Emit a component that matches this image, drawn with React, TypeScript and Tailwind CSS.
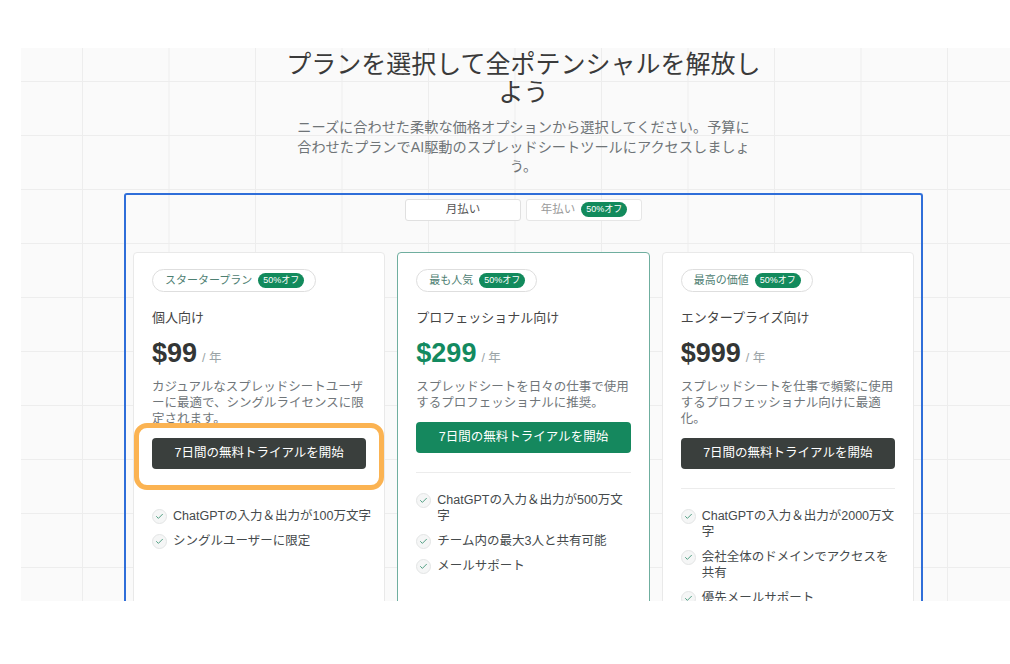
import { Check } from "lucide-react";

type Plan = {
  badge: string;
  target: string;
  price: string;
  desc: string[];
  features: string[][];
  featured?: boolean;
  highlight?: boolean;
};

const plans: Plan[] = [
  {
    badge: "スタータープラン",
    target: "個人向け",
    price: "$99",
    desc: [
      "カジュアルなスプレッドシートユーザ",
      "ーに最適で、シングルライセンスに限",
      "定されます。",
    ],
    features: [["ChatGPTの入力＆出力が100万文字"], ["シングルユーザーに限定"]],
    highlight: true,
  },
  {
    badge: "最も人気",
    target: "プロフェッショナル向け",
    price: "$299",
    desc: ["スプレッドシートを日々の仕事で使用", "するプロフェッショナルに推奨。"],
    features: [
      ["ChatGPTの入力＆出力が500万文", "字"],
      ["チーム内の最大3人と共有可能"],
      ["メールサポート"],
    ],
    featured: true,
  },
  {
    badge: "最高の価値",
    target: "エンタープライズ向け",
    price: "$999",
    desc: [
      "スプレッドシートを仕事で頻繁に使用",
      "するプロフェッショナル向けに最適",
      "化。",
    ],
    features: [
      ["ChatGPTの入力＆出力が2000万文", "字"],
      ["会社全体のドメインでアクセスを", "共有"],
      ["優先メールサポート"],
    ],
  },
];

const OffPill = () => (
  <span className="rounded-full bg-[#128a5c] px-[5px] text-[9px] leading-[15px] text-white">
    50%オフ
  </span>
);

const PlanCard = ({ plan }: { plan: Plan }) => {
  return (
    <div
      className={`flex flex-col rounded-[4px] border bg-white px-[18px] pt-[16px] ${
        plan.featured ? "border-[#6fae9f]" : "border-[#e9e9e9]"
      }`}
    >
      <div className="flex">
        <div className="flex h-[23px] items-center gap-[6px] rounded-full border border-[#dedede] pr-[11px] pl-[12px]">
          <span className="text-[11px] text-[#4e8072]">{plan.badge}</span>
          <OffPill />
        </div>
      </div>

      <div className="mt-[17px] text-[13px] leading-[18px] text-[#454545]">
        {plan.target}
      </div>

      <div className="mt-[10px] flex items-baseline leading-[32px]">
        <span
          className={`text-[27px] font-bold ${
            plan.featured ? "text-[#138a60]" : "text-[#333635]"
          }`}
        >
          {plan.price}
        </span>
        <span className="ml-[5px] text-[12.5px] text-[#9aa3a6]">/ 年</span>
      </div>

      <div className="mt-[5px] text-[12.5px] leading-[16px] text-[#70767a]">
        {plan.desc.map((l, i) => (
          <div key={i} className="whitespace-nowrap">
            {l}
          </div>
        ))}
      </div>

      <div className="relative mt-[11px]">
        <button
          className={`flex h-[31px] w-full items-center justify-center rounded-[4px] text-[12.5px] text-white ${
            plan.featured ? "bg-[#15885e]" : "bg-[#3a3f3d]"
          }`}
        >
          7日間の無料トライアルを開始
        </button>
        {plan.highlight && (
          <div className="pointer-events-none absolute top-[-15px] right-[-18px] bottom-[-21px] left-[-18px] rounded-[13px] border-[5px] border-[#fbb352]" />
        )}
      </div>

      <div className="mt-[19px] border-t border-[#ececec]" />

      <ul className="flex flex-col gap-[9px] pt-[19px] pb-[20px]">
        {plan.features.map((f, i) => (
          <li key={i} className="flex items-start gap-[6px]">
            <span className="mt-[1px] flex h-[15px] w-[15px] shrink-0 items-center justify-center rounded-full border border-[#e3e5e5] bg-[#f5f6f6]">
              <Check size={9} strokeWidth={2.2} className="text-[#2f8d6c]" />
            </span>
            <span className="text-[12.5px] leading-[16px] text-[#454a4c]">
              {f.map((l, j) => (
                <span key={j} className="block whitespace-nowrap">
                  {l}
                </span>
              ))}
            </span>
          </li>
        ))}
      </ul>
    </div>
  );
};

export default function App() {
  return (
    <div className="h-[664px] w-[1010px] overflow-hidden bg-white font-['Liberation_Sans','Noto_Sans_CJK_JP',sans-serif]">
      <div className="h-[48px]" />
      <section className="ml-[21px] h-[553px] w-[1005px] overflow-hidden bg-[#fafafa] bg-[linear-gradient(to_right,#ededed_1px,transparent_1px),linear-gradient(to_bottom,#ededed_1px,transparent_1px)] bg-[size:86.5px_54px] bg-[position:61px_33px] pt-[2px]">
        <h1 className="text-center text-[25px] leading-[28px] font-normal text-[#3a3a3a]">
          プランを選択して全ポテンシャルを解放し
          <br />
          よう
        </h1>
        <p className="mt-[12px] text-center text-[14.2px] leading-[19.5px] text-[#6f7477]">
          ニーズに合わせた柔軟な価格オプションから選択してください。予算に
          <br />
          合わせたプランでAI駆動のスプレッドシートツールにアクセスしましょ
          <br />
          う。
        </p>

        <div className="mx-auto mt-[16px] w-[799px] rounded-t-[3px] border-2 border-b-0 border-[#2f6ed9] px-[7px] pt-[4px]">
          <div className="flex justify-center gap-[5px]">
            <button className="flex h-[22px] w-[116px] items-center justify-center rounded-[3px] border border-[#e0e0e0] bg-white text-[11.5px] text-[#555]">
              月払い
            </button>
            <button className="flex h-[22px] w-[116px] items-center justify-center gap-[6px] rounded-[3px] border border-[#e6e6e6] bg-white text-[11.5px] text-[#9a9a9a]">
              年払い
              <OffPill />
            </button>
          </div>

          <div className="mt-[31px] grid grid-cols-3 gap-[12px]">
            {plans.map((p, i) => (
              <PlanCard key={i} plan={p} />
            ))}
          </div>
        </div>
      </section>
    </div>
  );
}
